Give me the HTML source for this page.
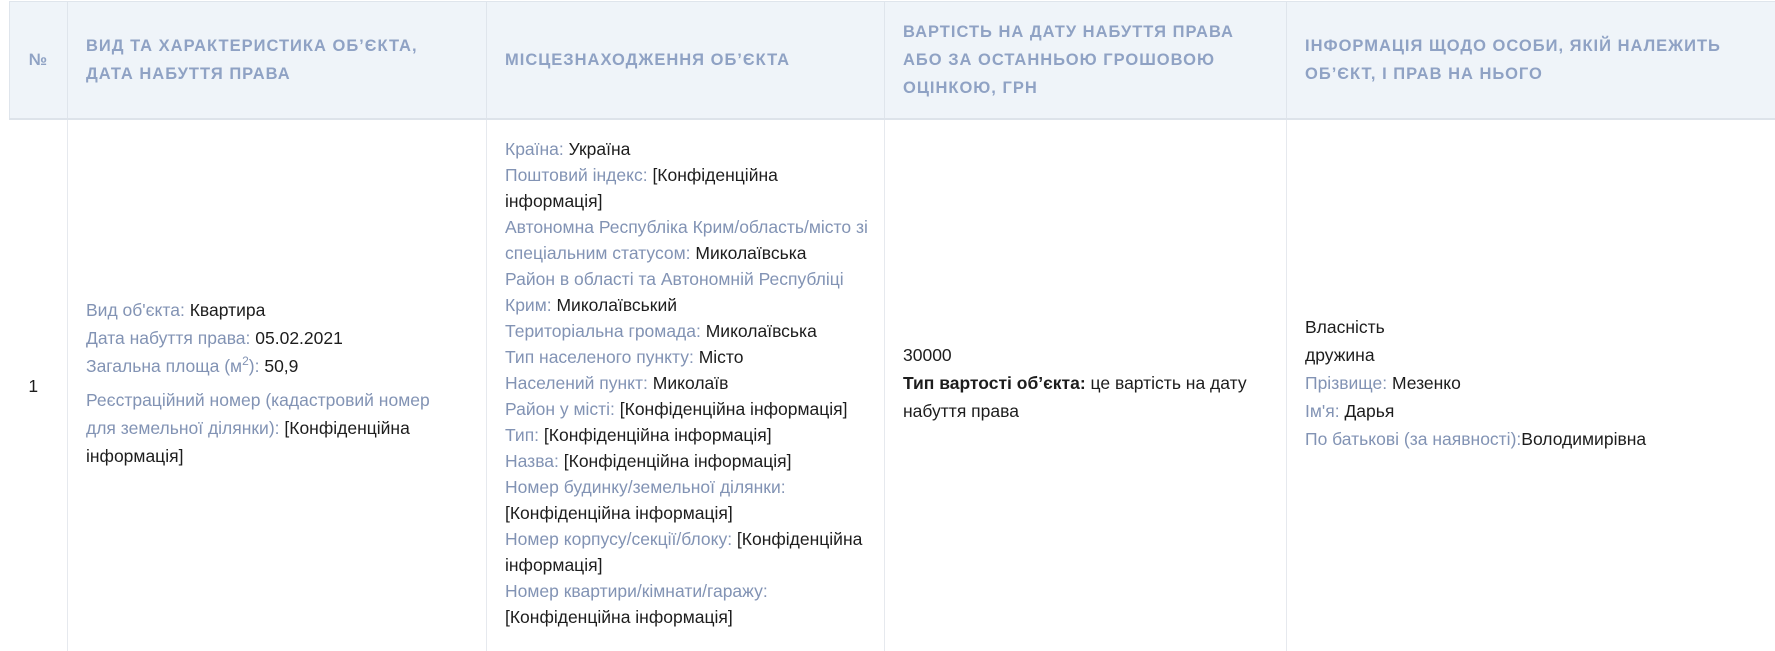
<!DOCTYPE html>
<html><head><meta charset="utf-8"><style>
html,body{margin:0;padding:0;background:#fff;width:1775px;height:650px;overflow:hidden}
body{font-family:"Liberation Sans",Arial,sans-serif;font-size:17.5px;color:#1d1d1d}
table{position:absolute;left:9px;top:1px;border-collapse:collapse;table-layout:fixed;width:1780px}
th{background:#eff4f9;color:#8fa2c4;font-weight:bold;font-size:16.5px;letter-spacing:1px;text-transform:uppercase;text-align:left;line-height:28px;height:116px;padding:0 24px 0 18px;border:1px solid #dfe5ec;border-bottom:2px solid #dde3ea;vertical-align:middle}
td{border-left:1px solid #e6e9ee;vertical-align:middle;padding:0 18px 6px;height:525px;line-height:28px}
.l{color:#8293b4}
.c2{line-height:26px}
sup{font-size:12px;line-height:0}
</style></head><body>
<table>
<colgroup><col style="width:58px"><col style="width:419px"><col style="width:398px"><col style="width:402px"><col style="width:503px"></colgroup>
<tr><th style="text-align:center;padding:0">№</th><th>Вид та характеристика об’єкта, дата набуття права</th><th>Місцезнаходження об’єкта</th><th>Вартість на дату набуття права або за останньою грошовою оцінкою, грн</th><th>Інформація щодо особи, якій належить об’єкт, і прав на нього</th></tr>
<tr>
<td style="text-align:center;padding:0 10px 0 0;border-left:none">1</td>
<td style="padding-right:40px"><div><span class="l">Вид об'єкта:</span> Квартира</div><div><span class="l">Дата набуття права:</span> 05.02.2021</div><div><span class="l">Загальна площа (м<sup>2</sup>):</span> 50,9</div><div style="margin-top:6px"><span class="l">Реєстраційний номер (кадастровий номер для земельної ділянки):</span> [Конфіденційна інформація]</div></td>
<td class="c2" style="padding-right:12px"><div><span class="l">Країна:</span> Україна</div><div><span class="l">Поштовий індекс:</span> [Конфіденційна інформація]</div><div><span class="l">Автономна Республіка Крим/область/місто зі спеціальним статусом:</span> Миколаївська</div><div><span class="l">Район в області та Автономній Республіці Крим:</span> Миколаївський</div><div><span class="l">Територіальна громада:</span> Миколаївська</div><div><span class="l">Тип населеного пункту:</span> Місто</div><div><span class="l">Населений пункт:</span> Миколаїв</div><div><span class="l">Район у місті:</span> [Конфіденційна інформація]</div><div><span class="l">Тип:</span> [Конфіденційна інформація]</div><div><span class="l">Назва:</span> [Конфіденційна інформація]</div><div><span class="l">Номер будинку/земельної ділянки:</span> [Конфіденційна інформація]</div><div><span class="l">Номер корпусу/секції/блоку:</span> [Конфіденційна інформація]</div><div><span class="l">Номер квартири/кімнати/гаражу:</span> [Конфіденційна інформація]</div></td>
<td><div>30000</div><div><b>Тип вартості об’єкта:</b> це вартість на дату набуття права</div></td>
<td><div>Власність</div><div>дружина</div><div><span class="l">Прізвище:</span> Мезенко</div><div><span class="l">Ім'я:</span> Дарья</div><div><span class="l">По батькові (за наявності):</span>Володимирівна</div></td>
</tr></table>
</body></html>
